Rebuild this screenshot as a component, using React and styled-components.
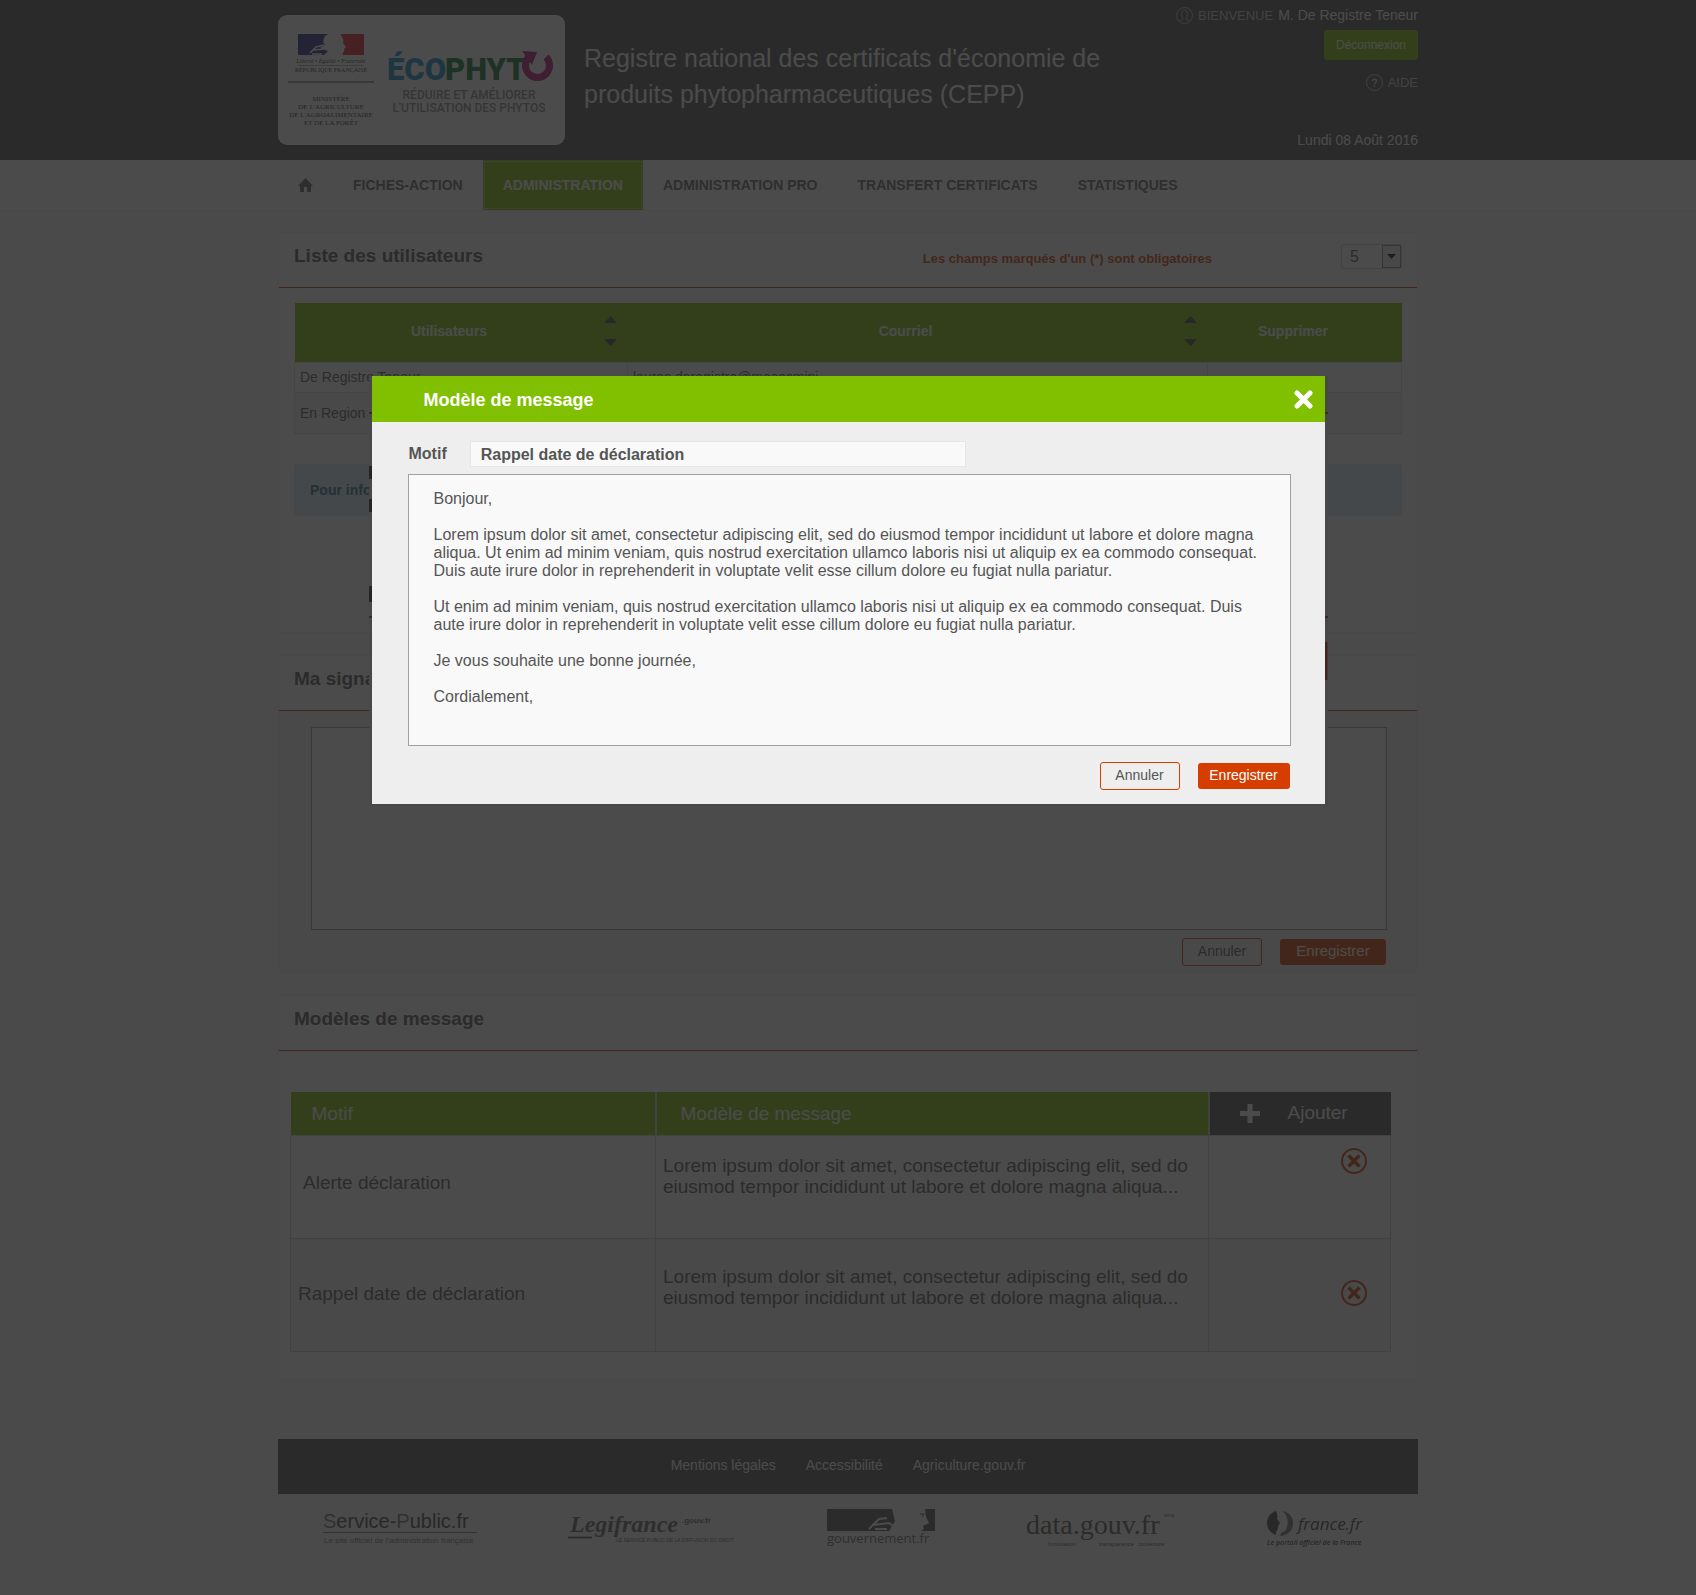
import React, { useState } from "react";
import styled, { createGlobalStyle } from "styled-components";

const GlobalStyle = createGlobalStyle`
    * {
        box-sizing: border-box;
    }

    body {
        margin: 0;
        background-color: #fafafa;
        font-family: "Liberation Sans", Arial, Helvetica, sans-serif;
        font-size: 14px;
        color: #555;
    }

    button, input, select, textarea {
        font-family: inherit;
        margin: 0;
    }
`;

const LOREM = "Lorem ipsum dolor sit amet, consectetur adipiscing elit, sed do eiusmod tempor incididunt ut labore et dolore magna aliqua...";

const MESSAGE = `Bonjour,

Lorem ipsum dolor sit amet, consectetur adipiscing elit, sed do eiusmod tempor incididunt ut labore et dolore magna aliqua. Ut enim ad minim veniam, quis nostrud exercitation ullamco laboris nisi ut aliquip ex ea commodo consequat. Duis aute irure dolor in reprehenderit in voluptate velit esse cillum dolore eu fugiat nulla pariatur.

Ut enim ad minim veniam, quis nostrud exercitation ullamco laboris nisi ut aliquip ex ea commodo consequat. Duis aute irure dolor in reprehenderit in voluptate velit esse cillum dolore eu fugiat nulla pariatur.

Je vous souhaite une bonne journée,

Cordialement,`;

const MinistryLogo = () => (
    <svg width="287" height="130" viewBox="0 0 287 130" role="img" aria-label="Ministère de l'agriculture - Écophyto">
        <rect x="20" y="19" width="30" height="21" fill="#2a2f8f" />
        <rect x="60" y="19" width="26" height="21" fill="#e1202a" />
        <path d="M50 19 C45 22 44 27 47 30 L42 33 L50 36 L46 40 H65 C64 37 67 37 66 34 L68 32 L65 28 C66 24 64 21 62 19 Z" fill="#fff" />
        <path d="M32 38 L38 32 L46 30 M36 35 L46 34 M34 39 L44 39" stroke="#fff" strokeWidth="1.5" fill="none" />
        <g fontFamily="Liberation Serif, Times New Roman, serif" textAnchor="middle" fill="#333">
            <text x="53" y="48" fontSize="6" fontStyle="italic">Liberté • Égalité • Fraternité</text>
            <text x="53" y="57" fontSize="6">RÉPUBLIQUE FRANÇAISE</text>
            <text x="53" y="86" fontSize="7">MINISTÈRE</text>
            <text x="53" y="94" fontSize="7">DE L'AGRICULTURE</text>
            <text x="53" y="102" fontSize="7">DE L'AGROALIMENTAIRE</text>
            <text x="53" y="110" fontSize="7">ET DE LA FORÊT</text>
        </g>
        <path d="M20 50.500 H86" stroke="#aaa" strokeWidth="1" />
        <path d="M10 67 H96" stroke="#333" strokeWidth="1" />
        <g fontFamily="Roboto, sans-serif" fontWeight="900">
            <text x="109" y="65" fontSize="31" fill="#1290cc">ÉCO</text>
            <text x="167" y="65" fontSize="31" fill="#0b7a35">PHYT</text>
        </g>
        <path d="M251 42 A12 12 0 1 0 268 42" stroke="#c0107a" strokeWidth="7" fill="none" />
        <path d="M244 36 L259 37 L254 50 Z" fill="#c0107a" />
        <g fontFamily="Roboto, sans-serif" fontSize="12" fontWeight="500" fill="#8a8a8a" textAnchor="middle">
            <text x="191" y="84">RÉDUIRE ET AMÉLIORER</text>
            <text x="191" y="97">L'UTILISATION DES PHYTOS</text>
        </g>
    </svg>
);

const UserIcon = () => (
    <svg width="17" height="17" viewBox="0 0 17 17" fill="none" stroke="#bbb">
        <circle cx="8.500" cy="8.500" r="8" />
        <path d="M3.500 14 C5 12.500 7 13 7 11.500 C5 9 5 3 8.500 3 C12 3 12 9 10 11.500 C10 13 12 12.500 13.500 14" />
    </svg>
);

const HelpIcon = () => (
    <svg width="17" height="17" viewBox="0 0 17 17" fill="none" stroke="#ccc">
        <circle cx="8.500" cy="8.500" r="8" />
        <path d="M6.500 7 C6.500 4.500 10.500 4.500 10.500 7 C10.500 8.500 8.500 8.500 8.500 10.500 M8.500 11.500 V13" strokeWidth="1.500" />
    </svg>
);

const HomeIcon = () => (
    <svg width="15" height="14" viewBox="0 0 15 14" fill="#666">
        <path d="M7.500 0 L15 8 H13 V14 H9 V9 H6 V14 H2 V8 H0 Z" />
    </svg>
);

const SortIcon = () => (
    <svg width="13" height="30" viewBox="0 0 13 30" fill="#444">
        <path d="M6.500 0 L13 7 H0 Z M0 23 H13 L6.500 30 Z" />
    </svg>
);

const CloseIcon = () => (
    <svg width="19" height="19" viewBox="0 0 19 19" stroke="#fff" strokeWidth="5" strokeLinecap="round">
        <path d="M3 3 L16 16 M16 3 L3 16" />
    </svg>
);

const PlusIcon = () => (
    <svg width="20" height="19" viewBox="0 0 20 19" fill="#fff">
        <path d="M7.500 0 H12.500 V7 H20 V12 H12.500 V19 H7.500 V12 H0 V7 H7.500 Z" />
    </svg>
);

const DeleteIcon = () => (
    <svg width="26" height="26" viewBox="0 0 26 26" fill="none" stroke="#d63e00">
        <circle cx="13" cy="13" r="12" strokeWidth="2" />
        <path d="M7.500 7.500 L18.500 18.500 M18.500 7.500 L7.500 18.500" strokeWidth="3.500" />
    </svg>
);

const ServicePublicLogo = () => (
    <svg width="154" height="39" viewBox="0 0 154 39" fill="#444">
        <text x="0" y="19" fontSize="20"><tspan fill="#777">S</tspan>ervice-<tspan fill="#777">P</tspan>ublic.fr</text>
        <path d="M0 23.500 H154" stroke="#777" />
        <text x="1" y="34" fontSize="8" fill="#777">Le site officiel de l'administration française</text>
    </svg>
);

const LegifranceLogo = () => (
    <svg width="168" height="39" viewBox="0 0 168 39" fill="#666">
        <text x="2" y="23" fontSize="24" fontFamily="Liberation Serif, serif" fontStyle="italic" fontWeight="bold">Legifrance</text>
        <text x="114" y="14" fontSize="8" fontWeight="bold">.gouv.fr</text>
        <path d="M0 28.500 H24" stroke="#666" strokeWidth="2" />
        <text x="48" y="33" fontSize="5">LE SERVICE PUBLIC DE LA DIFFUSION DU DROIT</text>
    </svg>
);

const GouvernementLogo = () => (
    <svg width="108" height="39" viewBox="0 0 108 39" fill="#555">
        <path d="M0 0 H65 L68 12 L62 22 H0 Z" />
        <path d="M98 0 H108 V22 H94 L97 20 L96 17 L102 14 L99 8 Z" />
        <path d="M42 20 L52 10 L60 9 M46 16 L62 14 L66 17 M48 20 L60 20" stroke="#fff" strokeWidth="2" fill="none" />
        <path d="M93 5 H97 L95 8" stroke="#555" fill="none" />
        <text x="0" y="34" fontSize="13" fontFamily="Open Sans, sans-serif" fill="#666">gouvernement.fr</text>
    </svg>
);

const DataGouvLogo = () => (
    <svg width="150" height="39" viewBox="0 0 150 39" fill="#555">
        <text x="0" y="25" fontSize="28" fontFamily="Liberation Serif, serif">data.gouv.fr</text>
        <text x="138" y="8" fontSize="4">BETA</text>
        <text x="22" y="37" fontSize="6">Innovation</text>
        <text x="73" y="37" fontSize="6">transparence . ouverture</text>
    </svg>
);

const FranceLogo = () => (
    <svg width="105" height="39" viewBox="0 0 105 39" fill="#444">
        <path d="M9 2 C-3 6 -3 22 9 26 C8 22 12 20 11 17 L13 14 L10 10 C11 7 10 4 9 2 Z" />
        <path d="M15 2 C30 4 30 25 14 27 C12 26 14 23 18 22 C22 17 22 6 15 2 Z" fill="#777" />
        <g fontFamily="Open Sans, sans-serif" fontStyle="italic">
            <text x="31" y="21" fontSize="17" fontWeight="500">france.fr</text>
            <text x="0" y="36" fontSize="7" fontWeight="600">Le portail officiel de la France</text>
        </g>
    </svg>
);

const App = () => {
    const [open, setOpen] = useState(true);
    const [motif, setMotif] = useState("Rappel date de déclaration");
    const [message, setMessage] = useState(MESSAGE);
    const close = () => setOpen(false);

    return (
        <Page>
            <GlobalStyle />
            <Header>
                <HeaderInner>
                    <LogoCard><MinistryLogo /></LogoCard>
                    <SiteTitle>Registre national des certificats d'économie de produits phytopharmaceutiques (CEPP)</SiteTitle>
                    <UserArea>
                        <UserLine><UserIcon /><Caps>BIENVENUE</Caps> M. De Registre Teneur</UserLine>
                        <LogoutButton type="button">Déconnexion</LogoutButton>
                        <HelpLink href="#aide"><HelpIcon /><Caps>AIDE</Caps></HelpLink>
                        <Today>Lundi 08 Août 2016</Today>
                    </UserArea>
                </HeaderInner>
            </Header>

            <Nav>
                <NavInner>
                    <NavLink href="#accueil" aria-label="Accueil"><HomeIcon /></NavLink>
                    <NavLink href="#fiches">FICHES-ACTION</NavLink>
                    <NavLink href="#administration" $active>ADMINISTRATION</NavLink>
                    <NavLink href="#pro">ADMINISTRATION PRO</NavLink>
                    <NavLink href="#transfert">TRANSFERT CERTIFICATS</NavLink>
                    <NavLink href="#stats">STATISTIQUES</NavLink>
                </NavInner>
            </Nav>

            <Main>
                <Panel>
                    <PanelHeader>
                        <PanelTitle>Liste des utilisateurs</PanelTitle>
                        <Required>Les champs marqués d'un (*) sont obligatoires</Required>
                        <PageSize>
                            <select aria-label="Nombre de lignes" defaultValue="5">
                                <option>5</option>
                                <option>10</option>
                            </select>
                            <Arrow><svg width="9" height="5" viewBox="0 0 9 5"><path d="M0 0 H9 L4.500 5 Z" fill="#111" /></svg></Arrow>
                        </PageSize>
                    </PanelHeader>
                    <UsersBody>
                        <UsersTable>
                            <colgroup><col width="333" /><col width="580" /><col /></colgroup>
                            <thead>
                                <tr>
                                    <th><HeadCell><span>Utilisateurs</span><SortIcon /></HeadCell></th>
                                    <th><HeadCell><span>Courriel</span><SortIcon /></HeadCell></th>
                                    <th><HeadCell $plain><span>Supprimer</span></HeadCell></th>
                                </tr>
                            </thead>
                            <tbody>
                                <UserRow $height={30}>
                                    <td>De Registre Teneur</td>
                                    <td>laures.deregistre@masocmini</td>
                                    <td />
                                </UserRow>
                                <UserRow $height={41} $shaded>
                                    <td>En Region</td>
                                    <td />
                                    <td />
                                </UserRow>
                            </tbody>
                        </UsersTable>
                        <Info>Pour information</Info>
                    </UsersBody>
                </Panel>

                <Panel>
                    <PanelHeader><PanelTitle as="label" htmlFor="signature">Ma signature</PanelTitle></PanelHeader>
                    <SignatureBody>
                        <SignatureBox id="signature" />
                        <Actions>
                            <OutlineButton type="button">Annuler</OutlineButton>
                            <SolidButton type="button" $large>Enregistrer</SolidButton>
                        </Actions>
                    </SignatureBody>
                </Panel>

                <Panel>
                    <PanelHeader><PanelTitle>Modèles de message</PanelTitle></PanelHeader>
                    <TemplatesBody>
                        <TemplatesTable>
                            <colgroup><col width="365" /><col width="553" /><col /></colgroup>
                            <thead>
                                <tr>
                                    <th>Motif</th>
                                    <th>Modèle de message</th>
                                    <th><AddButton type="button"><PlusIcon />Ajouter</AddButton></th>
                                </tr>
                            </thead>
                            <tbody>
                                <TemplateRow $height={103}>
                                    <td>Alerte déclaration</td>
                                    <td>{LOREM}</td>
                                    <td><DeleteButton type="button" aria-label="Supprimer"><DeleteIcon /></DeleteButton></td>
                                </TemplateRow>
                                <TemplateRow $height={113} $shaded>
                                    <td>Rappel date de déclaration</td>
                                    <td>{LOREM}</td>
                                    <td><DeleteButton type="button" aria-label="Supprimer"><DeleteIcon /></DeleteButton></td>
                                </TemplateRow>
                            </tbody>
                        </TemplatesTable>
                    </TemplatesBody>
                </Panel>
            </Main>

            <Footer>
                <FooterBar>
                    <a href="#mentions">Mentions légales</a>
                    <a href="#accessibilite">Accessibilité</a>
                    <a href="#agriculture">Agriculture.gouv.fr</a>
                </FooterBar>
                <Partners>
                    <a href="#service-public" aria-label="Service-Public.fr"><ServicePublicLogo /></a>
                    <a href="#legifrance" aria-label="Legifrance"><LegifranceLogo /></a>
                    <a href="#gouvernement" aria-label="gouvernement.fr"><GouvernementLogo /></a>
                    <a href="#data" aria-label="data.gouv.fr"><DataGouvLogo /></a>
                    <a href="#france" aria-label="france.fr"><FranceLogo /></a>
                </Partners>
            </Footer>

            {open && (
                <>
                    <Layer><ModalBacking /></Layer>
                    <Layer $dim>
                        <Modal role="dialog" aria-labelledby="modal-title">
                            <ModalHeader>
                                <ModalTitle id="modal-title">Modèle de message</ModalTitle>
                                <CloseButton type="button" aria-label="Fermer" onClick={close}><CloseIcon /></CloseButton>
                            </ModalHeader>
                            <ModalBody>
                                <MotifRow>
                                    <label htmlFor="motif">Motif</label>
                                    <MotifInput id="motif" value={motif} onChange={(e) => setMotif(e.target.value)} />
                                </MotifRow>
                                <MessageBox aria-label="Message" value={message} onChange={(e) => setMessage(e.target.value)} />
                                <Actions $top={16}>
                                    <OutlineButton type="button" onClick={close}>Annuler</OutlineButton>
                                    <SolidButton type="button" onClick={close}>Enregistrer</SolidButton>
                                </Actions>
                            </ModalBody>
                        </Modal>
                    </Layer>
                </>
            )}
        </Page>
    );
};

const Page = styled.div`
    position: relative;
    min-height: 100vh;
    padding-bottom: 46px;
`;

const Container = styled.div`
    width: 100%;
    max-width: 1140px;
    margin: 0 auto;
`;

const Header = styled.header`
    background-color: #4f4f4f;
`;

const HeaderInner = styled(Container)`
    display: flex;
    align-items: stretch;
    height: 160px;
    color: #fff;
`;

const LogoCard = styled.div`
    align-self: center;
    height: 130px;
    border-radius: 9px;
    background-color: #fff;
    overflow: hidden;
`;

const SiteTitle = styled.h1`
    flex: 1;
    max-width: 570px;
    margin: 40px 0 0 19px;
    font-size: 25px;
    font-weight: normal;
    line-height: 36px;
`;

const UserArea = styled.div`
    display: flex;
    flex-direction: column;
    align-items: flex-end;
    margin-left: auto;
    padding-top: 6px;
`;

const UserLine = styled.div`
    display: flex;
    align-items: center;
    gap: 5px;
    height: 18px;
`;

const Caps = styled.span`
    font-size: 13px;
    color: #ccc;
`;

const LogoutButton = styled.button`
    width: 94px;
    height: 30px;
    margin-top: 6px;
    border: 0;
    border-radius: 3px;
    background-color: #80c000;
    color: #fff;
    font-size: 12px;
`;

const HelpLink = styled.a`
    display: flex;
    align-items: center;
    gap: 5px;
    margin-top: 14px;
    text-decoration: none;
`;

const Today = styled.div`
    margin-top: 41px;
    line-height: 16px;
`;

const Nav = styled.nav`
    background-color: #fff;
    border-bottom: 1px solid #eee;
`;

const NavInner = styled(Container)`
    display: flex;
    height: 50px;
`;

const NavLink = styled.a`
    display: flex;
    align-items: center;
    padding: 0 20px;
    font-weight: bold;
    text-decoration: none;
    color: ${({ $active }) => ($active ? "#fff" : "#666")};
    background-color: ${({ $active }) => ($active ? "#80c000" : "transparent")};
    outline: ${({ $active }) => ($active ? "1px dotted #ddd" : "none")};
    outline-offset: -2px;
`;

const Main = styled(Container).attrs({ as: "main" })`
    display: flex;
    flex-direction: column;
    gap: 22px;
    padding-top: 21px;
`;

const Panel = styled.section`
    border: 1px solid #eee;
    border-radius: 4px;
    background-color: #fff;
`;

const PanelHeader = styled.div`
    display: flex;
    align-items: flex-start;
    height: 55px;
    padding: 0 15px;
    border-bottom: 1px solid #d63e00;
`;

const PanelTitle = styled.h2`
    margin: 11px 0 0;
    font-size: 19px;
    font-weight: bold;
    line-height: 24px;
    color: #555;
`;

const Required = styled.p`
    margin: 18px 129px 0 auto;
    font-size: 13px;
    font-weight: bold;
    line-height: 16px;
    color: #d63e00;
`;

const PageSize = styled.div`
    display: flex;
    width: 61px;
    height: 25px;
    margin-top: 11px;
    border: 1px solid #ccc;
    border-radius: 3px;

    select {
        flex: 1;
        appearance: none;
        border: 0;
        padding-left: 8px;
        background: transparent;
        font-size: 16px;
        color: #555;
    }
`;

const Arrow = styled.span`
    display: flex;
    align-items: center;
    justify-content: center;
    width: 19px;
    border: 1px solid #888;
    background-color: #eee;
    pointer-events: none;
`;

const UsersBody = styled.div`
    padding: 15px 15px 116px;
`;

const UsersTable = styled.table`
    width: 100%;
    table-layout: fixed;
    border-collapse: collapse;
    color: #555;

    th {
        height: 59px;
        padding: 0 0 2px;
        background-color: #80c000;
        color: #fff;
        font-size: 14px;
    }

    td {
        padding: 0 5px;
        border: 1px solid #ddd;
    }
`;

const HeadCell = styled.div`
    display: flex;
    align-items: center;
    padding-right: ${({ $plain }) => ($plain ? "23px" : "11px")};

    span {
        flex: 1;
    }
`;

const UserRow = styled.tr`
    height: ${({ $height }) => $height}px;
    background-color: ${({ $shaded }) => ($shaded ? "#f5f5f5" : "#fff")};
`;

const Info = styled.div`
    height: 52px;
    margin-top: 30px;
    padding: 0 16px;
    border-radius: 4px;
    background-color: #d9edf7;
    color: #31708f;
    font-weight: bold;
    line-height: 52px;
`;

const SignatureBody = styled.div`
    padding: 16px 30px 6px 32px;
    background-color: #f3f3f3;
`;

const SignatureBox = styled.textarea`
    display: block;
    width: 100%;
    height: 203px;
    border: 1px solid #999;
    background-color: #fff;
    resize: none;
`;

const Actions = styled.div`
    display: flex;
    align-items: center;
    justify-content: flex-end;
    gap: 18px;
    margin-top: ${({ $top = 8 }) => $top}px;
    padding-right: 1px;
`;

const OutlineButton = styled.button`
    width: 80px;
    height: 28px;
    padding: 0 0 2px;
    border: 1px solid #d63e00;
    border-radius: 3px;
    background-color: transparent;
    color: #555;
    font-size: 14px;
`;

const SolidButton = styled.button`
    width: ${({ $large }) => ($large ? "106px" : "92px")};
    height: 26px;
    padding: 0 0 2px;
    border: 0;
    border-radius: 3px;
    background-color: #d63e00;
    color: #fff;
    font-size: ${({ $large }) => ($large ? "15px" : "14px")};
`;

const TemplatesBody = styled.div`
    padding: 41px 26px 27px 11px;
`;

const TemplatesTable = styled.table`
    width: 100%;
    table-layout: fixed;
    border-collapse: collapse;
    font-size: 19px;
    line-height: 21px;

    th {
        height: 44px;
        padding: 0 21px;
        border-right: 2px solid #ccc;
        background-color: #80c000;
        color: #fff;
        font-weight: normal;
        text-align: left;
    }

    th:nth-child(2) {
        padding-left: 24px;
    }

    th:last-child {
        padding: 0;
        border-right: 0;
        background-color: #4f4f4f;
    }

    td {
        padding: 0 7px 4px;
        border: 1px solid #ccc;
    }

    td:nth-child(2) {
        padding-bottom: 16px;
    }

    td:last-child {
        padding: 12px 23px;
        text-align: right;
        vertical-align: middle;
    }

    tbody tr:first-child td:first-child {
        padding: 0 12px 10px;
    }

    tbody tr:first-child td:nth-child(2) {
        padding-bottom: 22px;
    }

    tbody tr:first-child td:last-child {
        vertical-align: top;
    }
`;

const AddButton = styled.button`
    display: flex;
    align-items: center;
    gap: 28px;
    width: 100%;
    padding: 0 0 0 30px;
    border: 0;
    background: none;
    color: #fff;
    font-size: 19px;
`;

const TemplateRow = styled.tr`
    height: ${({ $height }) => $height}px;
    background-color: ${({ $shaded }) => ($shaded ? "#f5f5f5" : "#fff")};
`;

const DeleteButton = styled.button`
    padding: 0;
    border: 0;
    background: none;
    line-height: 0;
`;

const Footer = styled(Container).attrs({ as: "footer" })`
    margin-top: 59px;
`;

const FooterBar = styled.div`
    display: flex;
    align-items: center;
    justify-content: center;
    gap: 30px;
    height: 55px;
    padding-bottom: 4px;
    background-color: #4f4f4f;

    a {
        color: #fff;
        text-decoration: none;
    }
`;

const Partners = styled.div`
    display: flex;
    justify-content: space-between;
    padding: 15px 46px 0 45px;

    a {
        line-height: 0;
    }
`;

const Layer = styled.div`
    position: absolute;
    inset: 0;
    display: flex;
    align-items: flex-start;
    justify-content: center;
    padding-top: 376px;
    background-color: ${({ $dim }) => ($dim ? "rgba(33, 33, 33, 0.81)" : "transparent")};
`;

/* Slightly wider sheet behind the dialog, only its edges show */
const ModalBacking = styled.div`
    width: 959px;
    height: 430px;
    background:
        linear-gradient(#d63e00, #d63e00) 0 36px / 100% 2px no-repeat,
        linear-gradient(#333, #333) 0 90px / 3px 13px no-repeat,
        linear-gradient(#333, #333) 0 123px / 3px 13px no-repeat,
        linear-gradient(#333, #333) 0 210px / 3px 16px no-repeat,
        linear-gradient(#d63e00, #d63e00) 0 240px / 100% 2px no-repeat,
        linear-gradient(#d63e00, #d63e00) 100% 266px / 50% 38px no-repeat,
        #f0f0f0;
`;

const Modal = styled.div`
    width: 100%;
    max-width: 953px;
    background-color: #eee;
`;

const ModalHeader = styled.div`
    display: flex;
    align-items: center;
    justify-content: space-between;
    height: 46px;
    padding: 0 12px 0 52px;
    background-color: #80c000;
`;

const ModalTitle = styled.h2`
    margin: 2px 0 0;
    color: #fff;
    font-size: 18px;
`;

const CloseButton = styled.button`
    padding: 0;
    border: 0;
    background: none;
    line-height: 0;
    cursor: pointer;
`;

const ModalBody = styled.div`
    padding: 19px 34px 14px 36px;
`;

const MotifRow = styled.div`
    display: flex;
    align-items: center;
    gap: 23px;
    margin-bottom: 7px;
    padding-left: 1px;
    font-size: 16px;
    font-weight: bold;
`;

const MotifInput = styled.input`
    width: 496px;
    height: 26px;
    padding: 1px 10px 0;
    border: 1px solid #e6e6e6;
    background-color: #f9f9f9;
    color: #555;
    font-size: 16px;
    font-weight: bold;
`;

const MessageBox = styled.textarea`
    display: block;
    width: 100%;
    height: 272px;
    padding: 15px 25px;
    border: 1px solid #a0a0a0;
    background-color: #f9f9f9;
    color: #555;
    font-size: 16px;
    line-height: 18px;
    resize: none;
`;

export default App;
